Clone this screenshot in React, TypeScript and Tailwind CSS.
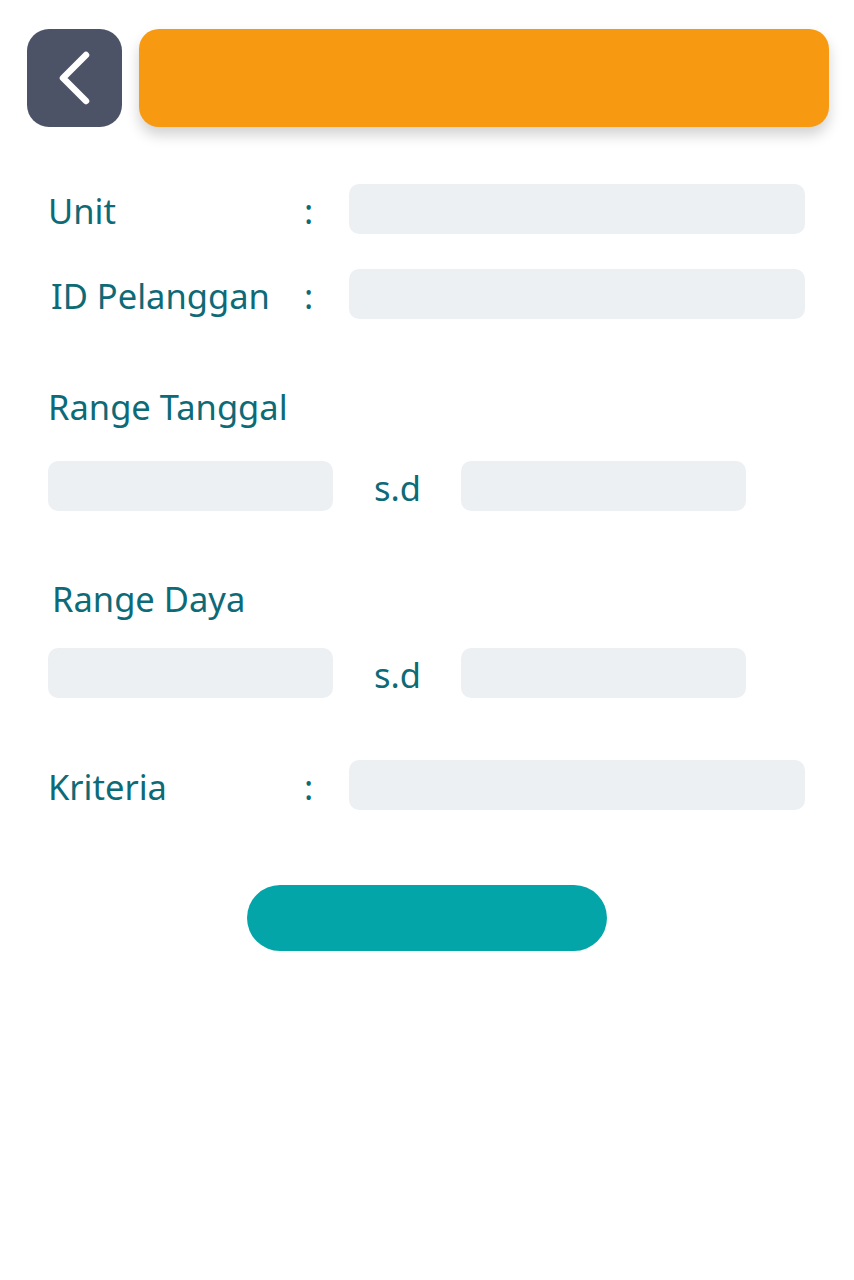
import React from 'react';

const labelCls = "text-[34.5px] leading-[40px] text-[#0d6a77]";
const inputCls = "h-[50px] rounded-[10px] bg-[#edf0f3]";

const FieldRow: React.FC<{ label: string; className?: string }> = ({ label, className }) => (
    <div className={`flex items-center ${className ?? ''}`}>
        <div className={`w-[256px] pt-[3px] ${labelCls}`}>{label}</div>
        <div className={`w-[45px] pt-[3px] ${labelCls}`}>:</div>
        <div className={`w-[456px] ${inputCls}`} />
    </div>
);

const RangeRow: React.FC<{ className?: string }> = ({ className }) => (
    <div className={`flex items-center ${className ?? ''}`}>
        <div className={`w-[285px] ${inputCls}`} />
        <div className={`w-[128px] pl-[41px] pt-[3px] ${labelCls}`}>s.d</div>
        <div className={`w-[285px] ${inputCls}`} />
    </div>
);

const App: React.FC = () => {
    return (
        <div className="min-h-[1280px] w-[854px] bg-white" style={{ fontFamily: '"Noto Sans", "Open Sans", sans-serif' }}>
            {/* header */}
            <div className="flex gap-[17px] pl-[27px] pr-[25px] pt-[29px]">
                <button
                    type="button"
                    className="flex h-[98px] w-[95px] shrink-0 items-center justify-center rounded-[22px] bg-[#4d5366]"
                >
                    <svg width="40" height="60" viewBox="0 0 40 60" fill="none" className="-ml-[4px]">
                        <path d="M33 7 L10 30 L33 53" stroke="white" strokeWidth="6.5" strokeLinecap="round" strokeLinejoin="round" />
                    </svg>
                </button>
                <div className="h-[98px] flex-1 rounded-[20px] bg-[#f79a12] shadow-[0_8px_14px_rgba(0,0,0,0.18)]" />
            </div>

            {/* form */}
            <div className="pl-[48px]">
                <FieldRow label="Unit" className="mt-[57px]" />
                <FieldRow label="ID Pelanggan" className="mt-[35px] [&>div:first-child]:pl-[3px]" />

                <div className={`mt-[68px] ${labelCls}`}>Range Tanggal</div>
                <RangeRow className="mt-[34px]" />

                <div className={`mt-[68px] pl-[4px] ${labelCls}`}>Range Daya</div>
                <RangeRow className="mt-[29px]" />

                <FieldRow label="Kriteria" className="mt-[62px]" />
            </div>

            <button
                type="button"
                className="mx-auto mt-[75px] block h-[66px] w-[360px] rounded-full bg-[#03a5a8]"
            />
        </div>
    );
};

export default App;
